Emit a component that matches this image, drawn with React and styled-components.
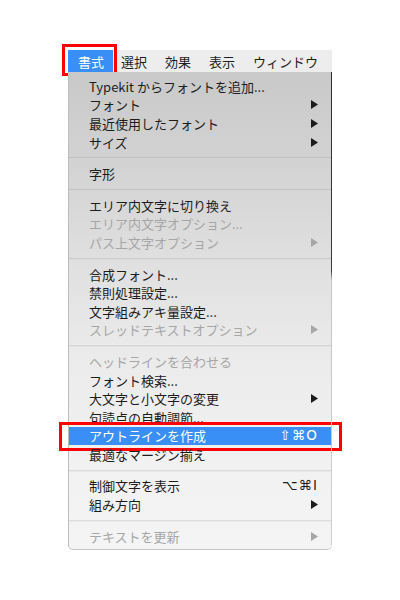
import React from 'react';
import styled, { createGlobalStyle } from 'styled-components';

const GlobalStyle = createGlobalStyle`
    body {
        margin: 0;
        background: #ffffff;
        font-family: "Noto Sans CJK JP", "DejaVu Sans", sans-serif;
    }
`

const groups = [
    [
        { label: 'Typekit からフォントを追加...' },
        { label: 'フォント', arrow: true },
        { label: '最近使用したフォント', arrow: true },
        { label: 'サイズ', arrow: true },
    ],
    [
        { label: '字形' },
    ],
    [
        { label: 'エリア内文字に切り換え' },
        { label: 'エリア内文字オプション...', disabled: true },
        { label: 'パス上文字オプション', arrow: true, disabled: true },
    ],
    [
        { label: '合成フォント...' },
        { label: '禁則処理設定...' },
        { label: '文字組みアキ量設定...' },
        { label: 'スレッドテキストオプション', arrow: true, disabled: true },
    ],
    [
        { label: 'ヘッドラインを合わせる', disabled: true },
        { label: 'フォント検索...' },
        { label: '大文字と小文字の変更', arrow: true },
        { label: '句読点の自動調節...' },
        { label: 'アウトラインを作成', shortcut: '⇧⌘O', active: true },
        { label: '最適なマージン揃え' },
    ],
    [
        { label: '制御文字を表示', shortcut: '⌥⌘I' },
        { label: '組み方向', arrow: true },
    ],
    [
        { label: 'テキストを更新', arrow: true, disabled: true },
    ],
]

const barItems = ['書式', '選択', '効果', '表示', 'ウィンドウ']

function Arrow() {
    return (
        <svg width="7" height="9" viewBox="0 0 7 9">
            <path d="M0 0 L7 4.5 L0 9 Z" fill="currentColor" />
        </svg>
    )
}

function App() {
    return (
        <Page>
            <GlobalStyle />
            <Menu>
                <MenuBar>
                    {barItems.map((name, i) => (
                        <BarItem key={name} active={i === 0}>
                            {name}
                            {i === 0 && <Marker inset="-6px -4px -4px -6px" />}
                        </BarItem>
                    ))}
                </MenuBar>
                <Panel>
                    {groups.map((group, gi) => (
                        <React.Fragment key={gi}>
                            {gi > 0 && <Separator />}
                            {group.map(item => (
                                <Row key={item.label} disabled={item.disabled} active={item.active}>
                                    <span>{item.label}</span>
                                    {item.shortcut && <Shortcut>{item.shortcut}</Shortcut>}
                                    {item.arrow && <Arrow />}
                                    {item.active && <Marker inset="-5px -10px -6px -10px" />}
                                </Row>
                            ))}
                        </React.Fragment>
                    ))}
                </Panel>
            </Menu>
        </Page>
    )
}

export default App


const Page = styled.div`
    width: 400px;
    height: 600px;
    padding: 50px 0 0 68px;
    box-sizing: border-box;
`

const Menu = styled.div`
    width: 264px;
    display: flex;
    flex-direction: column;
`

const MenuBar = styled.div`
    height: 22px;
    display: flex;
    align-items: stretch;
    background: #ededed;
`

const BarItem = styled.div`
    position: relative;
    display: flex;
    align-items: center;
    padding: 0 9px 0 ${p => p.active ? '10px' : '9px'};
    font-size: 13px;
    color: ${p => p.active ? '#ffffff' : '#1e1e1e'};
    background: ${p => p.active ? '#3a8ff6' : 'transparent'};
    margin-right: ${p => p.active ? '-1px' : '0'};
`

const Marker = styled.div`
    position: absolute;
    inset: ${p => p.inset};
    border: 3px solid #ff0000;
    pointer-events: none;
`

const Panel = styled.div`
    position: relative;
    display: flex;
    flex-direction: column;
    padding: 5px 0 4px;
    background: linear-gradient(#c9c9c9 0%, #d3d3d3 20%, #e1e1e1 42%, #ebebeb 60%, #f1f1f1 80%, #f4f4f4 100%);
    border-left: 1px solid #bdbdbd;
    border-bottom: 1px solid #c6c6c6;
    border-radius: 0 0 5px 5px;

    &::after {
        content: '';
        position: absolute;
        top: 0;
        right: 0;
        bottom: 4px;
        width: 1px;
        background: linear-gradient(#2e2e2e 0%, #3a3a3a 42%, #c4c4c4 44%, #cfcfcf 100%);
    }
`

const Separator = styled.div`
    margin: 6px 0 5px;
    height: 1px;
    background: rgba(0, 0, 0, 0.09);
    border-bottom: 1px solid rgba(255, 255, 255, 0.35);
`

const Row = styled.div`
    position: relative;
    height: 18.6px;
    display: flex;
    align-items: center;
    justify-content: space-between;
    padding: 0 14px 0 20px;
    font-size: 13px;
    line-height: 1;
    white-space: nowrap;
    color: ${p => p.active ? '#ffffff' : p.disabled ? '#a6a6a6' : '#1c1c1c'};
    background: ${p => p.active ? '#3a8ff6' : 'transparent'};
`

const Shortcut = styled.span`
    font-family: "DejaVu Sans", sans-serif;
    font-size: 13.5px;
    letter-spacing: 1px;
`
